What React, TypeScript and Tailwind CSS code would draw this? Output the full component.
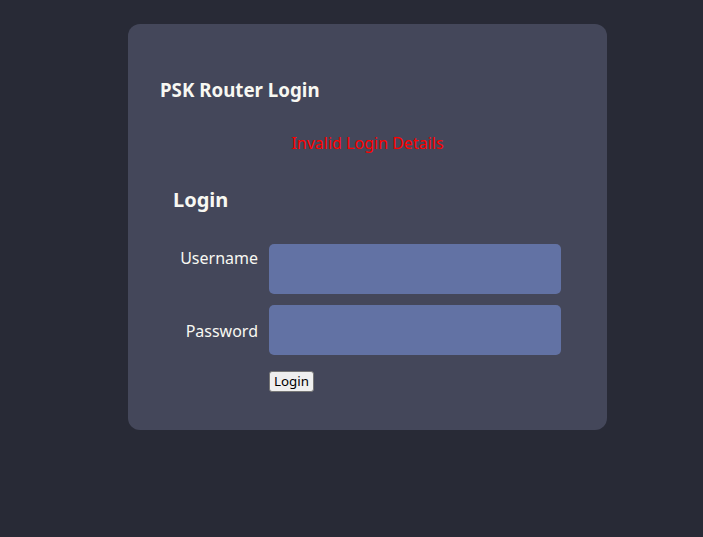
import React, { useState } from 'react';

const App = () => {
  const [username, setUsername] = useState('');
  const [password, setPassword] = useState('');

  return (
    <div className="min-h-[537px] w-full bg-[#282a36] pt-[24px] font-['Noto_Sans',sans-serif]">
      <div className="ml-[128px] w-[479px] rounded-[12px] bg-[#44475a] pt-[54px] pb-[38px]">
        <h1 className="pl-[32px] text-[18.72px] leading-[24px] font-bold text-[#f8f8f2]">PSK Router Login</h1>
        <p className="mt-[29px] text-center text-[16px] leading-[24px] text-[#ff0000]">Invalid Login Details</p>
        <form className="pl-[45px] pr-[46px]" onSubmit={(e) => e.preventDefault()}>
          <h2 className="mt-[31px] text-[20px] leading-[28px] font-bold text-[#f8f8f2]">Login</h2>
          <div className="mt-[30px] flex items-start gap-[11px]">
            <label htmlFor="username" className="w-[85px] pt-[2px] text-right text-[16px] leading-[24px] text-[#f8f8f2]">
              Username
            </label>
            <input
              id="username"
              type="text"
              value={username}
              onChange={(e) => setUsername(e.target.value)}
              className="h-[50px] w-[292px] rounded-[5px] bg-[#6272a4] px-3 text-[#f8f8f2] outline-none"
            />
          </div>
          <div className="mt-[11px] flex items-center gap-[11px]">
            <label htmlFor="password" className="w-[85px] pt-[2px] text-right text-[16px] leading-[24px] text-[#f8f8f2]">
              Password
            </label>
            <input
              id="password"
              type="password"
              value={password}
              onChange={(e) => setPassword(e.target.value)}
              className="h-[50px] w-[292px] rounded-[5px] bg-[#6272a4] px-3 text-[#f8f8f2] outline-none"
            />
          </div>
          <div className="mt-[16px] flex pl-[96px]">
            <button
              type="submit"
              className="h-[21px] rounded-[3px] border border-[#767676] bg-[#efefef] px-[4px] text-[13.33px] leading-[17px] text-black"
            >
              Login
            </button>
          </div>
        </form>
      </div>
    </div>
  );
};

export default App;
